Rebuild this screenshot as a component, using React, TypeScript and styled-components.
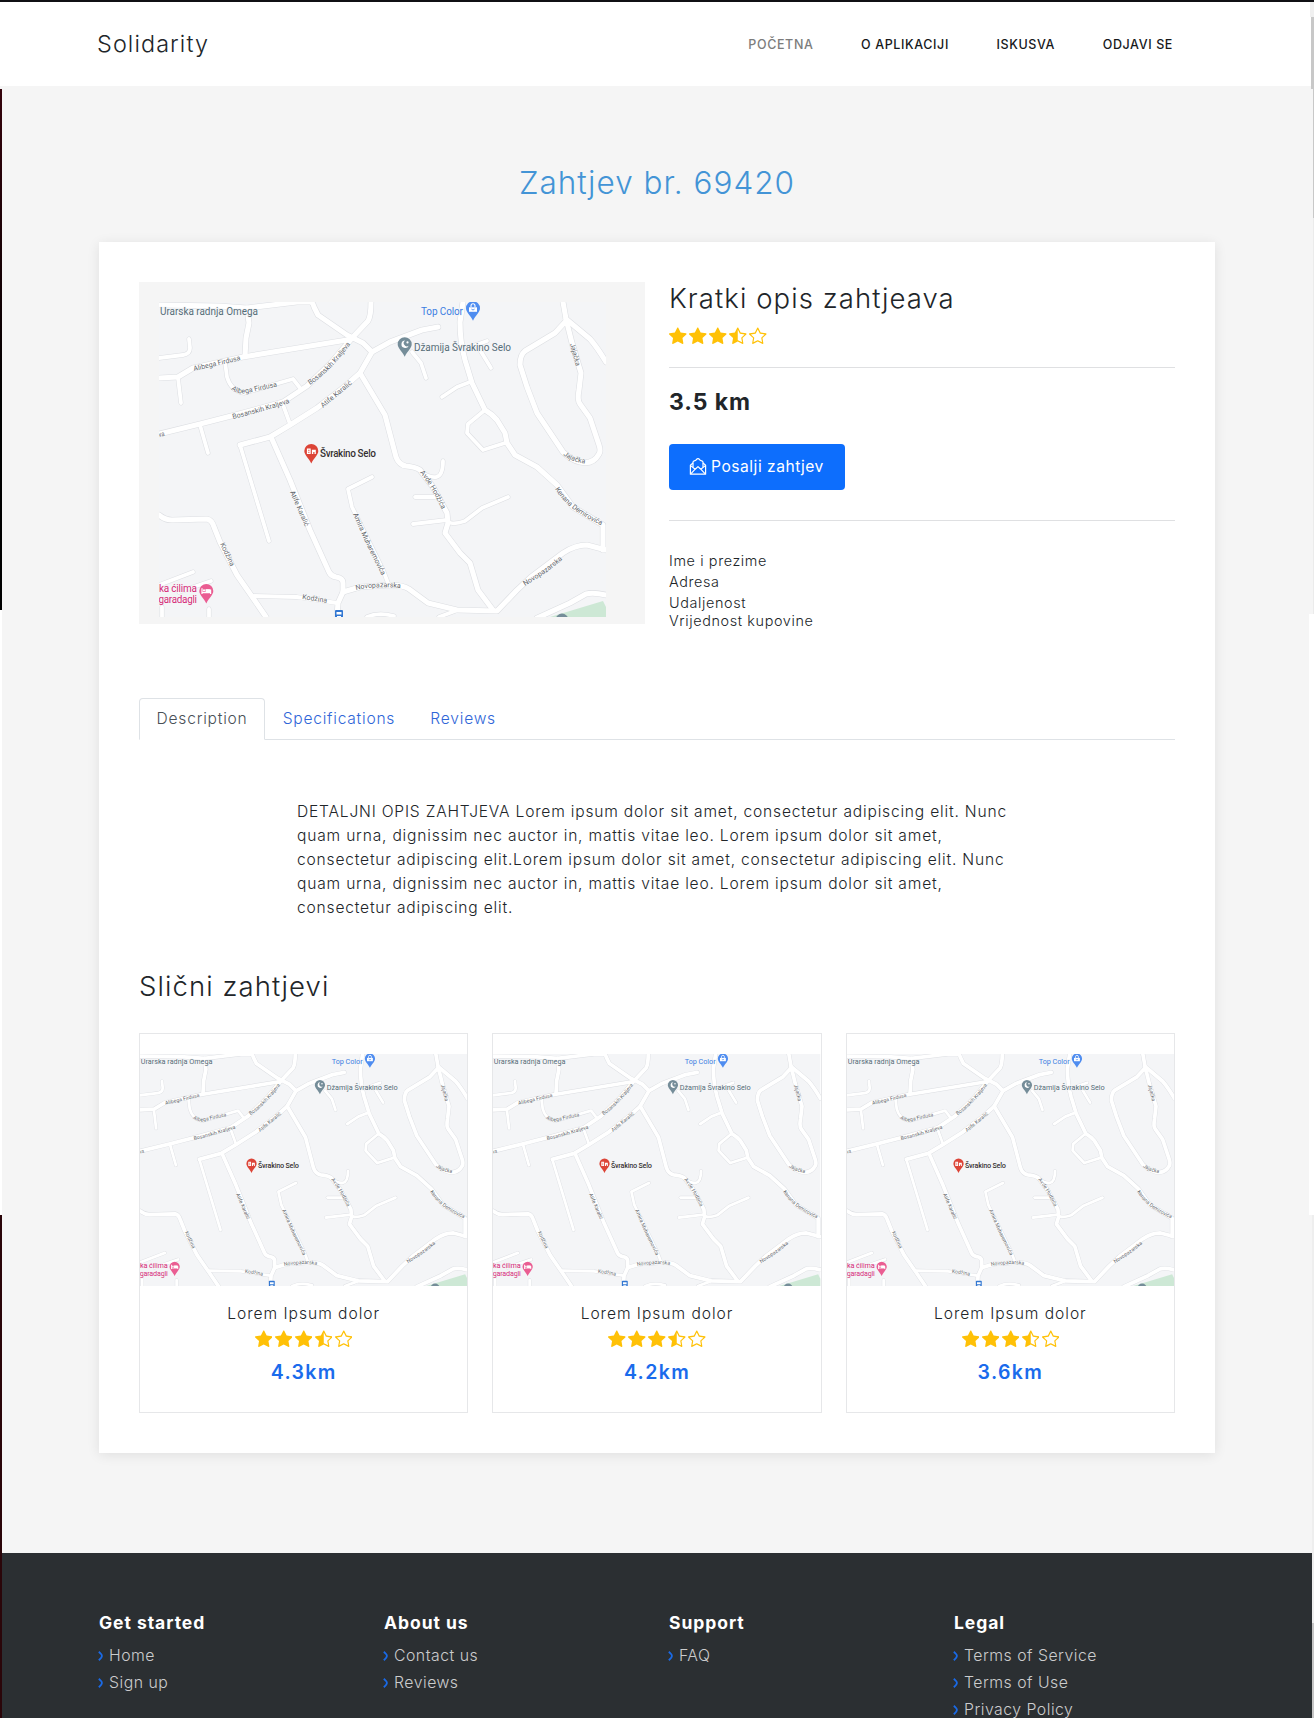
import React, { useId } from 'react';
import styled, { createGlobalStyle } from 'styled-components';
import { BsStarFill, BsStarHalf, BsStar } from 'react-icons/bs';

const GlobalStyle = createGlobalStyle`
  * { box-sizing: border-box; }
  body {
    margin: 0;
    background: #f5f5f5;
    color: #212529;
    font-family: Inter, "Liberation Sans", sans-serif;
    font-weight: 300;
  }
  h1, h2, h3, p, ul { margin: 0; padding: 0; font-weight: 300; }
  ul { list-style: none; }
  a { color: inherit; text-decoration: none; }
`;

const Page = styled.div`
  position: relative;
  width: 1314px;
  height: 1718px;
  overflow: hidden;
  background: #f5f5f5;
`;

const Edge = styled.div<{ $side: 'left' | 'right'; $top: number; $height: number; $width: number; $color: string }>`
  position: absolute;
  ${p => p.$side}: 0;
  top: ${p => p.$top}px;
  height: ${p => p.$height}px;
  width: ${p => p.$width}px;
  background: ${p => p.$color};
`;

const Header = styled.header`
  display: flex;
  align-items: center;
  justify-content: space-between;
  height: 86px;
  padding: 0 141px 0 97px;
  border-top: 2px solid #101014;
  background: #fff;
`;

const Brand = styled.a`
  font-size: 23.4px;
  letter-spacing: 1.1px;
  padding-bottom: 1px;
`;

const Nav = styled.nav`
  display: flex;
  gap: 47.6px;
`;

const NavLink = styled.a<{ $muted?: boolean }>`
  font-size: 12.5px;
  font-weight: 500;
  letter-spacing: 0.62px;
  color: ${p => (p.$muted ? '#7c7c7c' : '#16181b')};
`;

const PageTitle = styled.h1`
  margin: 77px 0 39px;
  font-size: 31.5px;
  line-height: 40px;
  letter-spacing: 1px;
  text-align: center;
  color: #4394d6;
`;

const Panel = styled.main`
  margin: 0 99px;
  height: 1211px;
  padding: 40px;
  background: #fff;
  box-shadow: 0 2px 12px rgba(0, 0, 0, 0.09);
`;

const Overview = styled.section`
  display: grid;
  grid-template-columns: 1fr 1fr;
  gap: 24px;
  align-items: start;
`;

const MapFrame = styled.div`
  height: 342px;
  padding: 20px 39px 7px 20px;
  background: #f5f5f5;
`;

const MapSvg = styled.svg`
  display: block;
  width: 100%;
  height: 100%;
  font-family: Roboto, sans-serif;
  font-weight: 400;
`;

const SectionTitle = styled.h2<{ $line: number }>`
  font-size: 27.5px;
  letter-spacing: 1.08px;
  line-height: ${p => p.$line}px;
`;

const StarRow = styled.div`
  display: flex;
  gap: 2.5px;
  color: #ffc107;
`;

const OverviewStars = styled.div`
  height: 17px;
  margin: 13px 0 23px;
`;

const Divider = styled.hr`
  height: 1px;
  margin: 0;
  border: 0;
  background: #dfe0e2;
`;

const Distance = styled.p`
  margin: 20px 0 28px;
  font-size: 23px;
  font-weight: 700;
  line-height: 28px;
  letter-spacing: 0.9px;
`;

const SendButton = styled.button`
  display: flex;
  align-items: center;
  gap: 4px;
  width: 176px;
  height: 46px;
  margin-bottom: 30px;
  padding: 0 0 1px 20px;
  border: 0;
  border-radius: 4px;
  background: #0d6efd;
  color: #fff;
  font: 400 15.6px Inter, sans-serif;
  letter-spacing: 0.52px;
  white-space: nowrap;
`;

const Facts = styled.ul`
  margin-top: 29px;
  font-size: 14.4px;
  letter-spacing: 0.62px;
  line-height: 21px;
  li:last-child { line-height: 16px; }
`;

const Tabs = styled.div`
  display: flex;
  height: 42px;
  margin-top: 69px;
  border-bottom: 1px solid #dee2e6;
`;

const Tab = styled.a<{ $active?: boolean }>`
  height: 42px;
  padding: 0 16.6px;
  border: 1px solid ${p => (p.$active ? '#dee2e6' : 'transparent')};
  border-bottom-color: ${p => (p.$active ? '#fff' : 'transparent')};
  border-radius: 4px 4px 0 0;
  font-size: 15.6px;
  letter-spacing: 0.76px;
  line-height: 40px;
  color: ${p => (p.$active ? '#495057' : '#2f66d8')};
`;

const Details = styled.p`
  margin: 60px 0 49px 158px;
  font-size: 15.6px;
  line-height: 24px;
  letter-spacing: 0.8px;
  white-space: nowrap;
`;

const Related = styled.section`
  display: grid;
  grid-template-columns: repeat(3, 1fr);
  gap: 24px;
  margin-top: 30px;
`;

const RequestCard = styled.article`
  display: flex;
  flex-direction: column;
  align-items: center;
  height: 380px;
  padding-top: 20px;
  border: 1px solid #e6e7e9;
`;

const CardMap = styled.div`
  width: 100%;
  height: 232px;
`;

const CardTitle = styled.p`
  margin: 16px 0 4px;
  font-size: 15.6px;
  line-height: 24px;
  letter-spacing: 0.97px;
`;

const CardDistance = styled.p`
  margin-top: 12px;
  font-size: 19.5px;
  font-weight: 600;
  line-height: 24px;
  letter-spacing: 1.35px;
  color: #1a6bec;
`;

const Footer = styled.footer`
  display: grid;
  grid-template-columns: repeat(4, 285px);
  height: 165px;
  margin-top: 100px;
  padding: 58px 0 0 99px;
  overflow: hidden;
  background: #2b2f32;
  color: #cbcccd;
`;

const FooterTitle = styled.h3`
  margin-bottom: 7px;
  font-size: 17.5px;
  font-weight: 700;
  line-height: 24px;
  letter-spacing: 0.95px;
  color: #fff;
`;

const FooterLink = styled.li`
  display: flex;
  align-items: center;
  gap: 6px;
  margin-left: -1px;
  font-size: 15.8px;
  line-height: 27px;
  letter-spacing: 0.5px;
`;

const ROADS = [
  'M0,3 L60,4 L88,6 L138,0 L152,0 Q154,1 155,5 L159,13 L188,33 L204,41 L213,50 L201,71 L184,86 L158,106 L131,123 L111,135 L81,143',
  'M88,6 L90,21 L87,36 L86,54',
  'M0,76 L19,75 L34,66 L84,55 L188,38',
  'M0,132 L41,122 L80,112 L124,100 L148,84 L172,61 L193,36 L209,19 Q212,14 212,0',
  'M112,135 L131,178 L151,228 L170,270 Q172,274 177,275 Q184,276 184,281 L184,290 L179,301 L178,315',
  'M201,71 L226,113 L237,155 Q240,163 247,164 Q257,165 261,168 L274,185 L288,211 L289,221 L286,231 L301,251 L311,261 L319,288 L334,308',
  'M213,50 L231,40 L263,28 L279,25',
  'M304,0 L301,20 Q301,40 306,58 L313,81 L326,108 Q333,112 338,118 L346,131 L348,141 L356,153 L378,165 L398,183 L414,205 L444,223 L444,248',
  'M404,0 L407,17 L431,37 Q438,45 447,60',
  'M407,19 L396,31 L366,49 Q361,53 361,63 L368,85 L378,111 L404,150 Q412,158 421,160 Q434,163 440,152 Q442,149 440,143 L431,116 L421,102 Q418,98 420,88 L422,71 L413,41 L407,17',
  'M184,290 L201,285 L231,283 Q244,283 250,287 L269,301 L298,308 L338,309 L358,288 L372,275 L404,251 Q416,243 428,243 L447,248',
  'M0,213 Q6,218 13,218 L48,217 Q53,218 55,225 L61,240 L78,273 L94,296 L107,315',
  'M378,316 L411,301 L427,292 Q434,290 447,293',
];

const LANES = [
  'M0,56 L24,53 Q31,52 31,46 L30,37',
  'M19,76 L22,101',
  'M66,60 L68,75 Q72,89 85,91 L134,77 L141,86',
  'M41,123 L49,151',
  'M123,100 L131,122',
  'M81,143 L110,239',
  'M253,50 L262,61 L267,76',
  'M326,108 L309,122 L308,131 L324,148 L346,141',
  'M311,80 L298,85 L283,95',
  'M311,45 L328,39',
  'M321,48 L332,66',
  'M284,159 Q284,174 277,175 Q271,176 262,170',
  'M256,195 L276,195',
  'M254,222 L288,218 Q291,224 306,219 L323,206 L349,195',
  'M296,309 L280,315',
  'M213,175 L189,187 L193,205 L224,268 L229,281',
  'M95,294 L138,295 L178,301',
  'M0,283 L34,270',
  'M20,290 L52,279',
  'M3,315 V305',
  'M50,315 V307',
  'M208,315 Q219,310 235,314',
];

type Label = [text: string, path: string, length: number];

const STREETS: Label[] = [
  ['Alibega Firdusa', 'M35,69 L90,56', 48],
  ['Alibega Firdusa', 'M72,87 Q78,93 88,91 L125,83', 48],
  ['Bosanskih Kraljeva', 'M74,117 L105,109 L140,98', 59],
  ['Bosanskih Kraljeva', 'M151,83 Q174,68 198,33', 58],
  ['Atife Karalić', 'M164,106 L199,77', 38],
  ['va', 'M0,135 L14,132', 6],
  ['Atife Karalić', 'M131,190 L150,234', 38],
  ['Kodžina', 'M61,242 L77,276', 25],
  ['Amira Muharemovića', 'M194,212 L207,242 L228,284', 68],
  ['Novopazarska', 'M197,288 Q220,283 250,287', 45],
  ['Kodžina', 'M143,297 L175,302', 25],
  ['Avde Hodžića', 'M261,171 Q272,183 288,218', 43],
  ['Kenana Demirovića', 'M396,187 Q411,212 452,227', 60],
  ['Novopazarska', 'M366,284 L388,270 L412,251', 46],
  ['Jajačka', 'M411,42 L420,76', 23],
  ['Jajačka', 'M404,153 Q415,162 436,162', 24],
];

function Pin({ x, y, color, children }: { x: number; y: number; color: string; children: React.ReactNode }) {
  return (
    <g transform={`translate(${x} ${y})`}>
      <path d="M-7,0 A7,7 0 1 1 7,0 C7,4 2.5,7 0,12.5 C-2.5,7 -7,4 -7,0Z" fill={color} />
      {children}
    </g>
  );
}

function StreetMap() {
  const id = useId();
  return (
    <MapSvg viewBox="0 0 447 315" preserveAspectRatio="none">
      <rect width="447" height="315" fill="#f4f5f7" />
      <path d="M391,315 L444,299 L447,305 L447,315Z" fill="#cde8d5" />
      <g fill="none" strokeLinecap="round" strokeLinejoin="round">
        {LANES.map(d => <path key={d} d={d} stroke="#dcdee2" strokeWidth="4.8" />)}
        {ROADS.map(d => <path key={d} d={d} stroke="#dcdee2" strokeWidth="6.2" />)}
        {LANES.map(d => <path key={`${d}-fill`} d={d} stroke="#fff" strokeWidth="3.8" />)}
        {ROADS.map(d => <path key={`${d}-fill`} d={d} stroke="#fff" strokeWidth="5.1" />)}
      </g>
      <g fontSize="7" fill="#63676c" stroke="#fff" strokeWidth="1" strokeOpacity="0.6" paintOrder="stroke">
        {STREETS.map(([text, path, length], i) => (
          <React.Fragment key={i}>
            <path id={`${id}-${i}`} d={path} fill="none" stroke="none" />
            <text>
              <textPath href={`#${id}-${i}`} textLength={length} lengthAdjust="spacingAndGlyphs">{text}</textPath>
            </text>
          </React.Fragment>
        ))}
      </g>
      <g fontSize="10" stroke="#f4f5f7" strokeWidth="1.2" paintOrder="stroke">
        <text x="1" y="13" textLength="98" fill="#566d78">Urarska radnja Omega</text>
        <text x="262" y="13" textLength="42" fill="#3b7de2">Top Color</text>
        <text x="255" y="49" textLength="97" fill="#566d78">Džamija Švrakino Selo</text>
        <text x="161" y="154.5" textLength="56" fill="#332f2f" fontWeight="500">Švrakino Selo</text>
        <text x="0" y="290" textLength="38" fill="#d62a78">ka ćilima</text>
        <text x="-0.5" y="301" textLength="38.5" fill="#d62a78">garadagli</text>
      </g>
      <Pin x={314} y={6.3} color="#4f8df0">
        <path d="M-4,-1 H4 V3.5 H-4Z" fill="#fff" />
        <path d="M-2,-1 V-2.5 A2,2 0 0 1 2,-2.5 V-1" fill="none" stroke="#fff" strokeWidth="1.1" />
        <path d="M-1.6,0.8 Q0,2.6 1.6,0.8" fill="none" stroke="#4f8df0" strokeWidth="0.9" />
      </Pin>
      <Pin x={245.7} y={42.2} color="#758d99">
        <path d="M0.5,-3.8 A3.8,3.8 0 1 0 4,1.6 A3.1,3.1 0 0 1 0.5,-3.8Z" fill="#fff" />
        <circle cx="2.8" cy="-1.8" r="1.1" fill="#fff" />
      </Pin>
      <Pin x={152.3} y={149} color="#dc4437">
        <path d="M-4.4,-2.6 H-0.6 V3 H-4.4Z M0.6,3 V-1.2 H4.5 V3 H3.2 V1 H2 V3Z" fill="#fff" />
        <path d="M-3.3,-0.7 H-1.7 M-3.3,1.3 H-1.7" stroke="#dc4437" strokeWidth="0.8" />
      </Pin>
      <Pin x={47.3} y={289} color="#ea5d92">
        <path d="M-4.3,-2.8 V3 M-4.3,1.6 H4.3 M4.3,3 V-0.8 H-0.5" fill="none" stroke="#fff" strokeWidth="1.2" />
        <path d="M-0.8,-1.8 H3 Q4.5,-1.8 4.5,0 V1.5 H-0.8Z" fill="#fff" />
        <circle cx="-2.3" cy="-0.6" r="1.1" fill="#fff" />
      </Pin>
      <path d="M176,315 V309 Q176,308 177,308 H183 Q184,308 184,309 V315Z" fill="#3277d2" />
      <path d="M177.5,310 H182.5 V312.5 H177.5Z M178,314 H182 V315 H178Z" fill="#fff" />
      <circle cx="403" cy="318" r="6.4" fill="#758d99" />
    </MapSvg>
  );
}

function Rating() {
  return (
    <StarRow>
      <BsStarFill size={17.5} />
      <BsStarFill size={17.5} />
      <BsStarFill size={17.5} />
      <BsStarHalf size={17.5} />
      <BsStar size={17.5} />
    </StarRow>
  );
}

function OpenEnvelope() {
  return (
    <svg width="18" height="17" viewBox="0 0 18 17" fill="none" stroke="#fff" strokeWidth="1.2" strokeLinejoin="round">
      <path d="M4,9.2 V4.2 Q4,3 5.2,2.8 Q6.6,2.6 7.2,1.8 Q9,-0.4 10.8,1.8 Q11.4,2.6 12.8,2.8 Q14,3 14,4.2 V9.2" />
      <path d="M4,5 L1.4,7.2 V16.2 H16.6 V7.2 L14,5" />
      <path d="M1.6,7.6 L6.2,11.2 M16.4,7.6 L11.8,11.2 M1.8,15.8 L6.2,11.2 L9,8.6 L11.8,11.2 L16.2,15.8" />
    </svg>
  );
}

function Chevron() {
  return (
    <svg width="5" height="10" viewBox="0 0 5 10" fill="none" stroke="#1a6ae6" strokeWidth="1.8">
      <path d="M0.8,0.8 Q3.9,3.4 3.9,5 Q3.9,6.6 0.8,9.2" />
    </svg>
  );
}

const RELATED = ['4.3km', '4.2km', '3.6km'];

const FOOTER = [
  { title: 'Get started', links: ['Home', 'Sign up'] },
  { title: 'About us', links: ['Contact us', 'Reviews'] },
  { title: 'Support', links: ['FAQ'] },
  { title: 'Legal', links: ['Terms of Service', 'Terms of Use', 'Privacy Policy'] },
];

export default function App() {
  return (
    <Page>
      <GlobalStyle />
      <Header>
        <Brand>Solidarity</Brand>
        <Nav>
          <NavLink $muted>POČETNA</NavLink>
          <NavLink>O APLIKACIJI</NavLink>
          <NavLink>ISKUSVA</NavLink>
          <NavLink>ODJAVI SE</NavLink>
        </Nav>
      </Header>

      <PageTitle>Zahtjev br. 69420</PageTitle>

      <Panel>
        <Overview>
          <MapFrame><StreetMap /></MapFrame>
          <div>
            <SectionTitle $line={32}>Kratki opis zahtjeava</SectionTitle>
            <OverviewStars><Rating /></OverviewStars>
            <Divider />
            <Distance>3.5 km</Distance>
            <SendButton><OpenEnvelope />Posalji zahtjev</SendButton>
            <Divider />
            <Facts>
              <li>Ime i prezime</li>
              <li>Adresa</li>
              <li>Udaljenost</li>
              <li>Vrijednost kupovine</li>
            </Facts>
          </div>
        </Overview>

        <Tabs>
          <Tab $active>Description</Tab>
          <Tab>Specifications</Tab>
          <Tab>Reviews</Tab>
        </Tabs>
        <Details>
          DETALJNI OPIS ZAHTJEVA Lorem ipsum dolor sit amet, consectetur adipiscing elit. Nunc<br />
          quam urna, dignissim nec auctor in, mattis vitae leo. Lorem ipsum dolor sit amet,<br />
          consectetur adipiscing elit.Lorem ipsum dolor sit amet, consectetur adipiscing elit. Nunc<br />
          quam urna, dignissim nec auctor in, mattis vitae leo. Lorem ipsum dolor sit amet,<br />
          consectetur adipiscing elit.
        </Details>

        <SectionTitle $line={34}>Slični zahtjevi</SectionTitle>
        <Related>
          {RELATED.map(distance => (
            <RequestCard key={distance}>
              <CardMap><StreetMap /></CardMap>
              <CardTitle>Lorem Ipsum dolor</CardTitle>
              <Rating />
              <CardDistance>{distance}</CardDistance>
            </RequestCard>
          ))}
        </Related>
      </Panel>

      <Footer>
        {FOOTER.map(({ title, links }) => (
          <div key={title}>
            <FooterTitle>{title}</FooterTitle>
            <ul>
              {links.map(link => <FooterLink key={link}><Chevron />{link}</FooterLink>)}
            </ul>
          </div>
        ))}
      </Footer>

      <Edge $side="left" $top={89} $height={521} $width={2} $color="linear-gradient(#35030c, #000 60%)" />
      <Edge $side="left" $top={610} $height={605} $width={2} $color="#fff" />
      <Edge $side="left" $top={1215} $height={503} $width={2} $color="#2a0509" />
      <Edge $side="right" $top={2} $height={15} $width={4} $color="#f0f0f0" />
      <Edge $side="right" $top={17} $height={72} $width={3} $color="#c8c8c8" />
      <Edge $side="right" $top={89} $height={129} $width={1} $color="#c8c8c8" />
      <Edge $side="right" $top={218} $height={396} $width={1} $color="#ebebeb" />
      <Edge $side="right" $top={614} $height={601} $width={5} $color="#fff" />
      <Edge $side="right" $top={1215} $height={408} $width={2} $color="#eeeeee" />
      <Edge $side="right" $top={1623} $height={95} $width={2} $color="#c6c6c6" />
    </Page>
  );
}
